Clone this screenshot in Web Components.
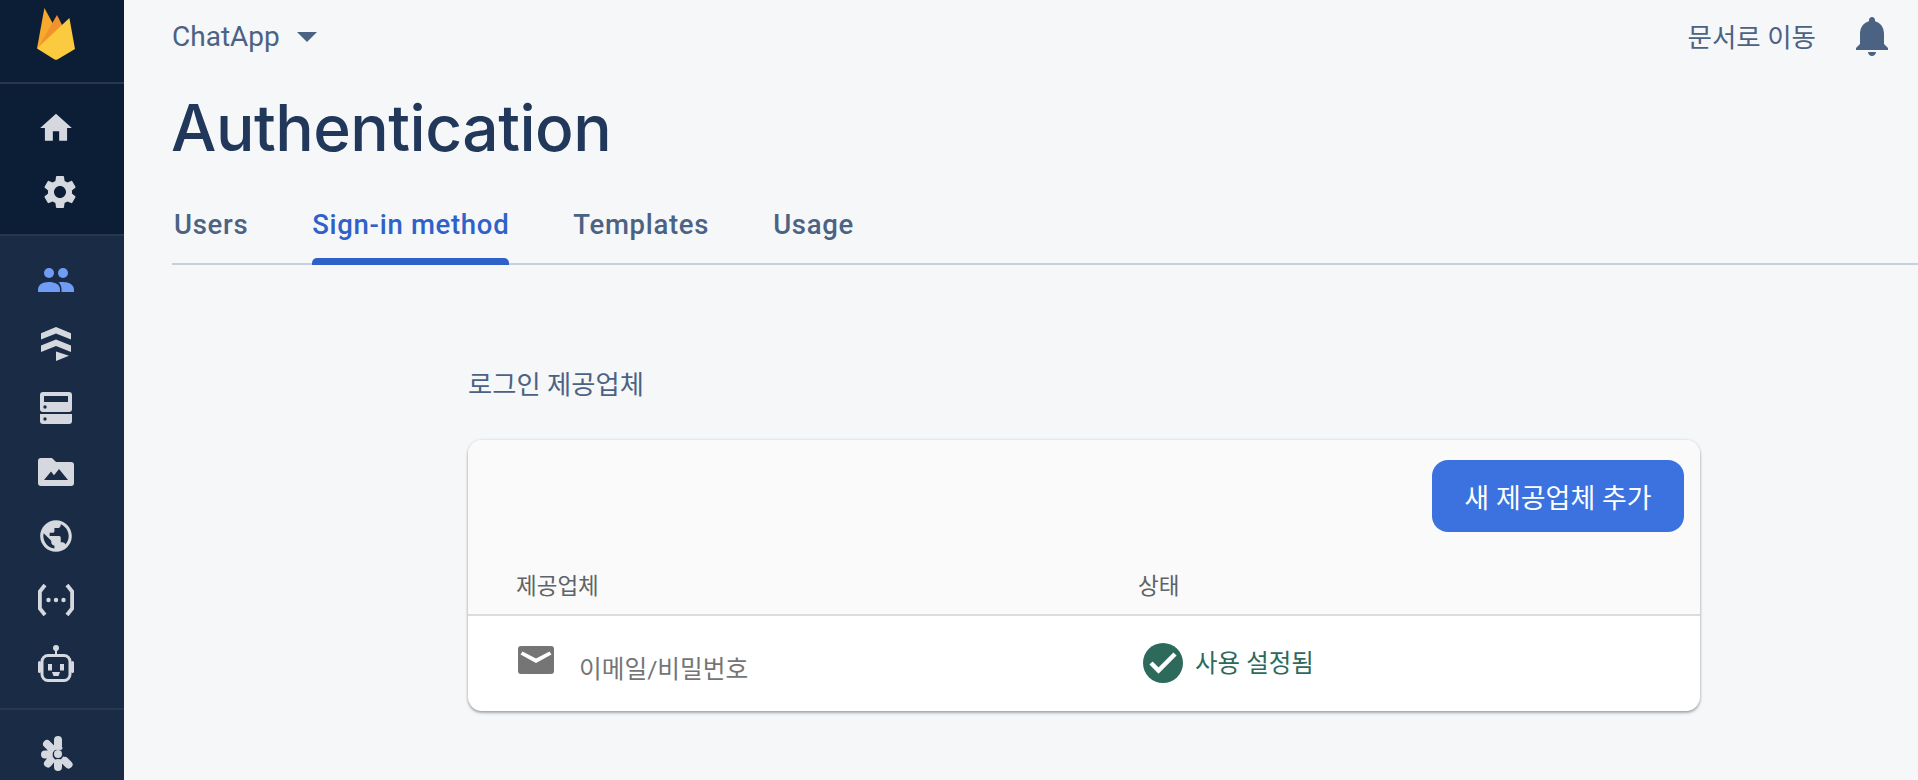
<!DOCTYPE html>
<html lang="ko">
<head>
<meta charset="utf-8">
<title>Authentication</title>
<style>
  html, body { margin: 0; height: 100%; overflow: hidden; background: #f6f7f9; }
  body { font-family: Roboto, "Noto Sans CJK KR", sans-serif; }
</style>
</head>
<body>
<app-shell>
  <side-bar slot="side"></side-bar>
  <top-bar project="ChatApp" docs="문서로 이동"></top-bar>
  <page-title>Authentication</page-title>
  <tab-bar></tab-bar>
  <provider-section></provider-section>
</app-shell>

<script>
  const FONT = 'Roboto, "Noto Sans CJK KR", sans-serif';

  class AppShell extends HTMLElement {
    constructor() {
      super();
      this.attachShadow({ mode: 'open' });
      this.shadowRoot.innerHTML = `
        <style>
          :host { display: flex; width: 100%; height: 780px; overflow: hidden; background: #f6f7f9; font-family: ${FONT}; }
          main { flex: 1; min-width: 0; padding-left: 48px; }
        </style>
        <slot name="side"></slot>
        <main><slot></slot></main>
      `;
    }
  }
  customElements.define('app-shell', AppShell);

  class NavIcon extends HTMLElement {
    constructor() {
      super();
      this.attachShadow({ mode: 'open' });
      this.shadowRoot.innerHTML = `
        <style>
          :host { display: flex; height: 64px; padding-right: 12px; align-items: center; justify-content: center; color: #d5d9df; }
          :host([active]) { color: #6f9cf5; }
          ::slotted(svg) { display: block; fill: currentColor; }
        </style>
        <slot></slot>
      `;
    }
  }
  customElements.define('nav-icon', NavIcon);

  class SideBar extends HTMLElement {
    constructor() {
      super();
      this.attachShadow({ mode: 'open' });
      this.shadowRoot.innerHTML = `
        <style>
          :host { display: block; flex: none; width: 124px; height: 780px; background: #1a2b45; overflow: hidden; }
          .top { background: #0b1e36; }
          .logo { height: 82px; padding-right: 12px; display: flex; justify-content: center; align-items: flex-start; }
          .rule { height: 2px; background: #26374f; }
          .home { padding: 12px 0 10px; }
          .list { padding-top: 12px; height: 472px; box-sizing: border-box; }
          svg { display: block; fill: currentColor; }
        </style>
        <div class="top">
          <div class="logo">
            <svg width="38" height="52" viewBox="37 8 38 52" style="margin-top:8px">
              <path fill="#f7a92c" d="M37 48.5 44.4 8l8.4 15.6L41 46z"/>
              <path fill="#f2922d" d="M38 48 52 23.5 57 15l6.4 12.5L46 44z"/>
              <path fill="#fcca3f" d="M37 48.5 69.4 18 75 49 57.4 59.4q-1.4.7-2.8 0z"/>
            </svg>
          </div>
          <div class="rule"></div>
          <div class="home">
            <nav-icon>
              <svg width="38" height="38" viewBox="0 0 24 24"><path d="M10 20v-6h4v6h5v-8h3L12 3 2 12h3v8z"/></svg>
            </nav-icon>
            <nav-icon>
              <svg width="40" height="40" viewBox="0 0 24 24" style="margin-left:8px"><path d="M19.14 12.94c.04-.3.06-.61.06-.94 0-.32-.02-.64-.07-.94l2.03-1.58c.18-.14.23-.41.12-.61l-1.92-3.32c-.12-.22-.37-.29-.59-.22l-2.39.96c-.5-.38-1.03-.7-1.62-.94l-.36-2.54c-.04-.24-.24-.41-.48-.41h-3.84c-.24 0-.43.17-.47.41l-.36 2.54c-.59.24-1.13.57-1.62.94l-2.39-.96c-.22-.08-.47 0-.59.22L2.74 8.87c-.12.21-.08.47.12.61l2.03 1.58c-.05.3-.09.63-.09.94s.02.64.07.94l-2.03 1.58c-.18.14-.23.41-.12.61l1.92 3.32c.12.22.37.29.59.22l2.39-.96c.5.38 1.03.7 1.62.94l.36 2.54c.05.24.24.41.48.41h3.84c.24 0 .44-.17.47-.41l.36-2.54c.59-.24 1.13-.56 1.62-.94l2.39.96c.22.08.47 0 .59-.22l1.92-3.32c.12-.22.07-.47-.12-.61l-2.01-1.58zM12 15.6c-1.98 0-3.6-1.62-3.6-3.6s1.62-3.6 3.6-3.6 3.6 1.62 3.6 3.6-1.62 3.6-3.6 3.6z"/></svg>
            </nav-icon>
          </div>
        </div>
        <div class="rule"></div>
        <div class="list">
          <nav-icon active>
            <svg width="36" height="24" viewBox="38 268 36 24">
              <circle cx="49" cy="273" r="5"/><circle cx="63" cy="273" r="5"/>
              <path d="M38 292v-2.5c0-4.5 4-7.500 11-7.500 5.500 0 11 2 11 7.500v2.500z"/>
              <path d="M61.500 292v-3c0-2.500-1-5-3-6.500 1.500-.4 3-.5 4.500-.5 6.500 0 11 3 11 7.500v2.500z"/>
            </svg>
          </nav-icon>
          <nav-icon>
            <svg width="30" height="34" viewBox="41 327 30 34">
              <path d="M56 327l15 6.2v6.300l-15-6-15 6v-6.300z"/>
              <path d="M56 339.500l15 6v6.500l-15-6-15 6v-6.500z"/>
              <path d="M56 351.500l13 4.200-13 5.300z"/>
            </svg>
          </nav-icon>
          <nav-icon>
            <svg width="32" height="32" viewBox="40 392 32 32">
              <path fill-rule="evenodd" d="M43 392h26a3 3 0 0 1 3 3v14a3 3 0 0 1-3 3H43a3 3 0 0 1-3-3v-14a3 3 0 0 1 3-3zm1 4v6h24v-6zm1 9.300a1.700 1.700 0 1 0 0 3.400 1.700 1.700 0 0 0 0-3.400z"/>
              <path fill-rule="evenodd" d="M40 414h32v7a3 3 0 0 1-3 3H43a3 3 0 0 1-3-3zm5 3.300a1.700 1.700 0 1 0 0 3.400 1.700 1.700 0 0 0 0-3.400z"/>
            </svg>
          </nav-icon>
          <nav-icon>
            <svg width="36" height="28" viewBox="38 458 36 28">
              <path fill-rule="evenodd" d="M41 458h11l4 4h15a3 3 0 0 1 3 3v18a3 3 0 0 1-3 3H41a3 3 0 0 1-3-3v-22a3 3 0 0 1 3-3zm3 22h24l-9-11-5 6.200-3-3.700z"/>
            </svg>
          </nav-icon>
          <nav-icon>
            <svg width="38" height="38" viewBox="0 0 24 24"><path d="M12 2C6.48 2 2 6.48 2 12s4.48 10 10 10 10-4.48 10-10S17.52 2 12 2zm-1 17.93c-3.95-.49-7-3.85-7-7.93 0-.62.08-1.21.21-1.79L9 15v1c0 1.1.9 2 2 2v1.93zm6.9-2.54c-.26-.81-1-1.39-1.9-1.39h-1v-3c0-.55-.45-1-1-1H8v-2h2c.55 0 1-.45 1-1V7h2c1.1 0 2-.9 2-2v-.41c2.93 1.19 5 4.06 5 7.41 0 2.08-.8 3.97-2.1 5.39z"/></svg>
          </nav-icon>
          <nav-icon>
            <svg width="36" height="34" viewBox="38 583 36 34">
              <path fill="none" stroke="currentColor" stroke-width="3.8" d="M45 585l-5.100 6.500v17l5.100 6.500M67 585l5.100 6.500v17L67 615"/>
              <circle cx="48.500" cy="600" r="2.200"/><circle cx="56" cy="600" r="2.200"/><circle cx="63.500" cy="600" r="2.200"/>
            </svg>
          </nav-icon>
          <nav-icon>
            <svg width="36" height="38" viewBox="38 645 36 38">
              <circle cx="56" cy="648" r="3"/>
              <rect x="55" y="650" width="2" height="5"/>
              <rect x="42" y="655.500" width="28" height="25" rx="6" fill="none" stroke="currentColor" stroke-width="3"/>
              <rect x="38" y="661" width="3" height="12" rx="1.500"/><rect x="71" y="661" width="3" height="12" rx="1.500"/>
              <rect x="48" y="664" width="4" height="6.500"/><rect x="60" y="664" width="4" height="6.500"/>
              <path d="M52 672h8l-1.500 4h-5z"/>
            </svg>
          </nav-icon>
        </div>
        <div class="rule"></div>
        <nav-icon style="height:88px">
          <svg width="36" height="36" viewBox="40 736 36 36" style="margin-left:4px">
            <g fill="none" stroke="currentColor" stroke-width="8" stroke-linecap="round">
              <path d="M58 746v-6M51 748l-4-4M48.500 754.500H45M50.500 760.500l-2.500 3M58 763v4M65 761l3.500 3.500"/>
            </g>
            <path fill="none" stroke="currentColor" stroke-width="3" d="M62 749a7 7 0 1 0 2.500 8"/>
            <circle cx="58" cy="754" r="4"/>
          </svg>
        </nav-icon>
      `;
    }
  }
  customElements.define('side-bar', SideBar);

  class TopBar extends HTMLElement {
    constructor() {
      super();
      this.attachShadow({ mode: 'open' });
      this.shadowRoot.innerHTML = `
        <style>
          :host { display: flex; height: 74px; align-items: center; color: #4c6283; font-size: 28px; }
          .name { margin-top: -2px; }
          .caret { width: 0; height: 0; margin-left: 17px; border: 10px solid transparent; border-top-color: #4c6283; border-bottom-width: 0; }
          .docs { margin: -4px 0 0 auto; font-size: 26.5px; }
          svg { display: block; margin: -2px 22px 0 32px; fill: #4c6283; }
        </style>
        <span class="name"></span>
        <span class="caret"></span>
        <span class="docs"></span>
        <svg width="48" height="48" viewBox="0 0 24 24"><path d="M12 22c1.1 0 2-.9 2-2h-4c0 1.1.9 2 2 2zm6-6v-5c0-3.07-1.63-5.64-4.5-6.32V4c0-.83-.67-1.5-1.5-1.5s-1.5.67-1.5 1.5v.68C7.64 5.36 6 7.92 6 11v5l-2 2v1h16v-1l-2-2z"/></svg>
      `;
      this.shadowRoot.querySelector('.name').textContent = this.getAttribute('project');
      this.shadowRoot.querySelector('.docs').textContent = this.getAttribute('docs');
    }
  }
  customElements.define('top-bar', TopBar);

  class PageTitle extends HTMLElement {
    constructor() {
      super();
      this.attachShadow({ mode: 'open' });
      this.shadowRoot.innerHTML = `
        <style>
          :host { display: block; height: 108px; margin-left: -1px; color: #21385a; font-family: Inter, sans-serif; font-size: 64px; line-height: 108px; font-weight: 500; letter-spacing: -.5px; }
        </style>
        <slot></slot>
      `;
    }
  }
  customElements.define('page-title', PageTitle);

  class TabBar extends HTMLElement {
    constructor() {
      super();
      this.attachShadow({ mode: 'open' });
      const tabs = ['Users', 'Sign-in method', 'Templates', 'Usage'];
      this.shadowRoot.innerHTML = `
        <style>
          :host { display: flex; height: 81px; gap: 64px; padding-left: 2px; border-bottom: 2px solid #c5d0e0; }
          a { display: block; position: relative; height: 81px; box-sizing: border-box; padding-top: 25px; color: #4c6283; font-size: 27.5px; font-weight: 500; letter-spacing: .7px; line-height: 36px; }
          a.on { color: #2f62c9; }
          a.on::after { content: ""; position: absolute; left: 0; right: 0; bottom: -2px; height: 7px; background: #2f62c9; border-radius: 5px 5px 0 0; }
        </style>
        ${tabs.map((t, i) => `<a class="${i === 1 ? 'on' : ''}">${t}</a>`).join('')}
      `;
    }
  }
  customElements.define('tab-bar', TabBar);

  class ProviderSection extends HTMLElement {
    constructor() {
      super();
      this.attachShadow({ mode: 'open' });
      this.shadowRoot.innerHTML = `
        <style>
          :host { display: block; padding: 102px 0 0 296px; }
          h2 { margin: 0 0 37px; font-size: 26.3px; font-weight: 400; line-height: 36px; color: #4c6283; }
          .card { width: 1232px; height: 271px; box-sizing: border-box; border-radius: 14px; background: #fff; overflow: hidden;
            box-shadow: 0 2px 3px rgba(0,0,0,.3), 0 0 3px rgba(0,0,0,.14); }
          .head { height: 176px; box-sizing: border-box; background: #fafafa; border-bottom: 2px solid #dcdcdc; display: flex; flex-direction: column; }
          .actions { display: flex; justify-content: flex-end; padding: 20px 16px 0 0; }
          button { width: 252px; height: 72px; border: 0; border-radius: 16px; background: #3b72e0; color: #fff; font: 400 27px ${FONT}; }
          .cols, .row { display: grid; grid-template-columns: 622px 1fr; }
          .cols { margin-top: 36px; padding-left: 48px; color: #5f6368; font-size: 22.5px; line-height: 36px; }
          .row { padding: 24px 0 0 50px; }
          .prov { display: flex; color: #757575; font-size: 24.7px; line-height: 36px; }
          .prov svg { display: block; fill: #757575; margin: 6px 25px 0 0; }
          .prov span { padding-top: 12px; }
          .status { display: flex; align-items: center; gap: 12px; height: 42px; margin: 2px 0 0 3px; color: #2d6a5c; font-size: 24.5px; }
          .status span { margin-top: -4px; }
        </style>
        <h2>로그인 제공업체</h2>
        <div class="card">
          <div class="head">
            <div class="actions"><button>새 제공업체 추가</button></div>
            <div class="cols"><span>제공업체</span><span>상태</span></div>
          </div>
          <div class="row">
            <div class="prov">
              <svg width="36" height="28" viewBox="0 0 36 28"><path d="M3 0h30a3 3 0 0 1 3 3v22a3 3 0 0 1-3 3H3a3 3 0 0 1-3-3V3a3 3 0 0 1 3-3zm1.500 5.500L2.500 8.500 18 17l15.500-8.500-2-3L18 12.500z"/></svg>
              <span>이메일/비밀번호</span>
            </div>
            <div class="status">
              <svg width="40" height="40" viewBox="0 0 40 40"><circle cx="20" cy="20" r="20" fill="#2d6a5c"/><path d="M8 20l7.500 7.500L32 11" fill="none" stroke="#fff" stroke-width="4.5"/></svg>
              <span>사용 설정됨</span>
            </div>
          </div>
        </div>
      `;
    }
  }
  customElements.define('provider-section', ProviderSection);
</script>
</body>
</html>
